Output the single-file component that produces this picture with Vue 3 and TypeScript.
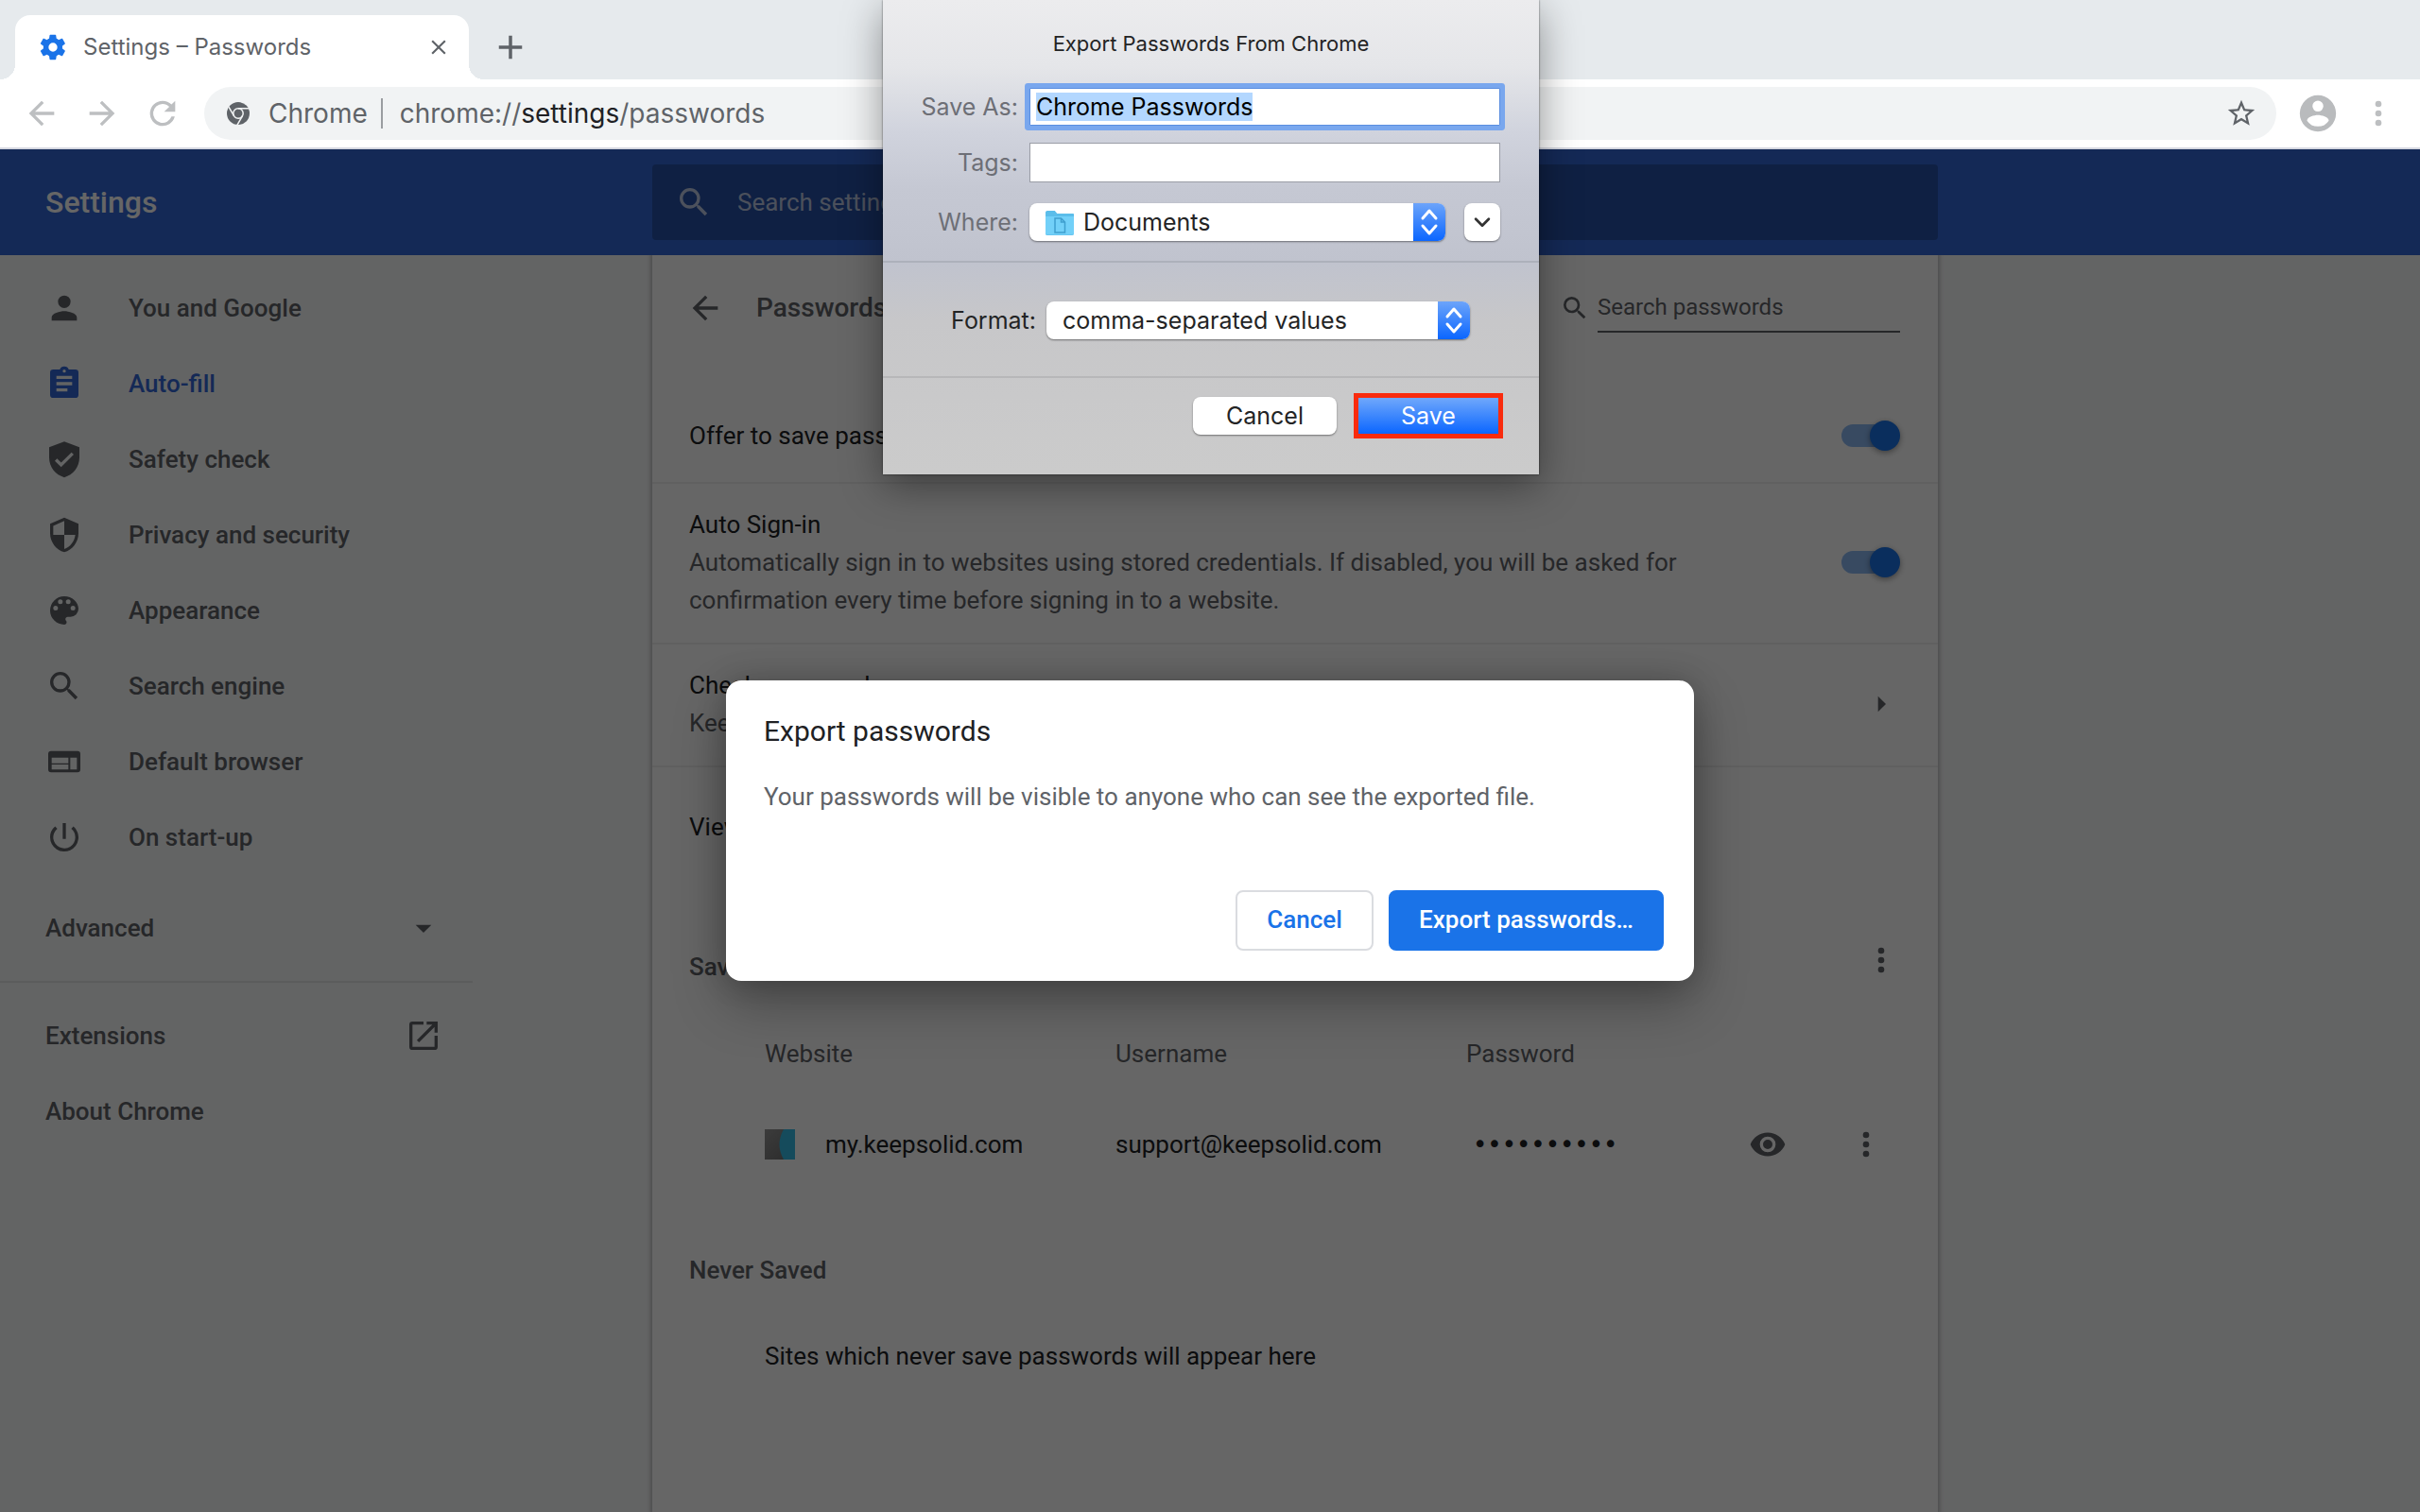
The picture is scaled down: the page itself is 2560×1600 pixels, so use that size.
<script setup lang="ts">
import { h, onMounted, ref } from 'vue'

const icons: Record<string, string> = {
  gear: 'M19.4 13c0-.3.1-.7.1-1s0-.7-.1-1l2.1-1.6c.2-.2.2-.4.1-.6l-2-3.5c-.1-.2-.4-.3-.6-.2l-2.5 1c-.5-.4-1.1-.7-1.7-1l-.4-2.6c0-.3-.2-.5-.5-.5h-4c-.2 0-.5.2-.5.4l-.4 2.7c-.6.3-1.1.6-1.7 1l-2.5-1c-.2-.1-.5 0-.6.2l-2 3.5c-.1.2 0 .5.1.6L4.5 11c0 .3-.1.7-.1 1s0 .7.1 1l-2.2 1.6c-.2.2-.2.4-.1.6l2 3.5c.1.2.4.3.6.2l2.5-1c.5.4 1.1.7 1.7 1l.4 2.7c0 .2.2.4.5.4h4c.2 0 .5-.2.5-.4l.4-2.7c.6-.3 1.1-.6 1.7-1l2.5 1c.2.1.5 0 .6-.2l2-3.5c.1-.2.1-.5-.1-.6zM12 15.5a3.5 3.5 0 1 1 0-7 3.5 3.5 0 0 1 0 7z',
  close: 'M19 6.4 17.6 5 12 10.6 6.400 5 5 6.400 10.600 12 5 17.600 6.400 19 12 13.400 17.600 19 19 17.600 13.400 12z',
  plus: 'M19 13h-6v6h-2v-6H5v-2h6V5h2v6h6z',
  back: 'M20 11H7.83l5.59-5.59L12 4l-8 8 8 8 1.41-1.41L7.83 13H20z',
  forward: 'M12 4l-1.41 1.41L16.17 11H4v2h12.17l-5.58 5.59L12 20l8-8z',
  reload: 'M17.65 6.35A7.958 7.958 0 0 0 12 4a8 8 0 1 0 7.73 10h-2.08A6 6 0 1 1 12 6c1.66 0 3.14.69 4.22 1.78L13 11h7V4z',
  star: 'M22 9.24l-7.19-.62L12 2 9.19 8.63 2 9.24l5.46 4.73L5.82 21 12 17.27 18.18 21l-1.63-7.03zM12 15.4l-3.76 2.27 1-4.28-3.32-2.88 4.38-.38L12 6.1l1.71 4.04 4.38.38-3.32 2.88 1 4.28z',
  account: 'M12 2a10 10 0 1 0 0 20 10 10 0 0 0 0-20zm0 3a3 3 0 1 1 0 6 3 3 0 0 1 0-6zm0 14.2a7.200 7.200 0 0 1-6-3.220c.03-1.990 4-3.080 6-3.080s5.970 1.090 6 3.080a7.200 7.200 0 0 1-6 3.220z',
  more: 'M12 8a2 2 0 1 0 0-4 2 2 0 0 0 0 4zm0 2a2 2 0 1 0 0 4 2 2 0 0 0 0-4zm0 6a2 2 0 1 0 0 4 2 2 0 0 0 0-4z',
  search: 'M15.5 14h-.79l-.28-.27A6.471 6.471 0 0 0 16 9.5 6.5 6.5 0 1 0 9.5 16c1.61 0 3.09-.59 4.23-1.57l.27.28v.79l5 4.99L20.49 19zm-6 0a4.5 4.5 0 1 1 0-9 4.5 4.5 0 0 1 0 9z',
  person: 'M12 12a4 4 0 1 0 0-8 4 4 0 0 0 0 8zm0 2c-2.67 0-8 1.34-8 4v2h16v-2c0-2.66-5.33-4-8-4z',
  clipboard: 'M19 3h-4.18a3 3 0 0 0-5.64 0H5a2 2 0 0 0-2 2v14a2 2 0 0 0 2 2h14a2 2 0 0 0 2-2V5a2 2 0 0 0-2-2zm-7 0a1 1 0 1 1 0 2 1 1 0 0 1 0-2zm2 14H7v-2h7zm3-4H7v-2h10zm0-4H7V7h10z',
  shieldCheck: 'M12 .8 2.400 4.400V11c0 5.900 4 11 9.600 12.500 5.600-1.500 9.600-6.600 9.600-12.500V4.400zM10 17l-4-4 1.410-1.410L10 14.170l6.590-6.590L18 9z',
  shieldHalf: 'M12 1 3 5v6c0 5.550 3.840 10.740 9 12 5.160-1.260 9-6.450 9-12V5zm0 11h7c-.53 4.120-3.280 7.790-7 8.940V12H5V6.300l7-3.110z',
  palette: 'M12 3a9 9 0 1 0 0 18c.83 0 1.5-.67 1.5-1.5 0-.39-.15-.74-.39-1.01-.23-.26-.38-.61-.38-.99 0-.83.67-1.5 1.5-1.5H16a5 5 0 0 0 5-5c0-4.42-4.03-8-9-8zM6.500 12a1.500 1.500 0 1 1 0-3 1.500 1.500 0 0 1 0 3zm3-4a1.500 1.500 0 1 1 0-3 1.500 1.500 0 0 1 0 3zm5 0a1.500 1.500 0 1 1 0-3 1.500 1.500 0 0 1 0 3zm3 4a1.500 1.500 0 1 1 0-3 1.500 1.500 0 0 1 0 3z',
  browser: 'M20.4 5.200H3.600a1.800 1.800 0 0 0-1.800 1.800v10a1.800 1.800 0 0 0 1.800 1.800h16.800a1.800 1.800 0 0 0 1.800-1.800V7a1.800 1.800 0 0 0-1.800-1.800zM14.600 17H4v-3.200h10.600zm0-4H4V9.400h10.600zM20 17h-4.200V9.400H20z',
  power: 'M13 3h-2v10h2zm4.83 2.17-1.42 1.42A6.92 6.92 0 0 1 19 12a7 7 0 1 1-11.41-5.42L6.17 5.17A8.932 8.932 0 0 0 3 12a9 9 0 1 0 14.83-6.83z',
  caretDown: 'M7 10l5 5 5-5z',
  caretRight: 'M10 7l5 5-5 5z',
  launch: 'M19 19H5V5h7V3H5a2 2 0 0 0-2 2v14a2 2 0 0 0 2 2h14a2 2 0 0 0 2-2v-7h-2zM14 3v2h3.59l-9.83 9.83 1.41 1.41L19 6.41V10h2V3z',
  eye: 'M12 4.500C7 4.500 2.730 7.610 1 12c1.730 4.390 6 7.500 11 7.500s9.270-3.110 11-7.500c-1.730-4.390-6-7.500-11-7.500zM12 17a5 5 0 1 1 0-10 5 5 0 0 1 0 10zm0-8a3 3 0 1 0 0 6 3 3 0 0 0 0-6z',
}

const Icon = (props: { name: string }) =>
  h('svg', { viewBox: '0 0 24 24', 'aria-hidden': 'true' }, [
    h('path', { d: icons[props.name], 'fill-rule': 'evenodd' }),
  ])
Icon.props = ['name']

interface MenuItem { icon: string; label: string; active?: boolean }
const menu: MenuItem[] = [
  { icon: 'person', label: 'You and Google' },
  { icon: 'clipboard', label: 'Auto-fill', active: true },
  { icon: 'shieldCheck', label: 'Safety check' },
  { icon: 'shieldHalf', label: 'Privacy and security' },
  { icon: 'palette', label: 'Appearance' },
  { icon: 'search', label: 'Search engine' },
  { icon: 'browser', label: 'Default browser' },
  { icon: 'power', label: 'On start-up' },
]

const logins = [{ site: 'my.keepsolid.com', user: 'support@keepsolid.com', secret: 'keepsolid1' }]

const offerToSave = ref(true)
const autoSignIn = ref(true)
const fileName = ref('Chrome Passwords')
const tags = ref('')
const nameField = ref<HTMLInputElement | null>(null)

onMounted(() => {
  nameField.value?.focus()
  nameField.value?.select()
})
</script>

<template>
  <div class="window">
    <div class="tabstrip">
      <div class="tab">
        <Icon name="gear" class="tab-gear" />
        <span class="tab-title">Settings – Passwords</span>
        <button class="icon-btn" aria-label="Close tab"><Icon name="close" class="i26" /></button>
      </div>
      <button class="icon-btn new-tab" aria-label="New tab"><Icon name="plus" class="i42" /></button>
    </div>

    <nav class="toolbar" aria-label="Browser">
      <button class="icon-btn pale" aria-label="Back"><Icon name="back" class="i40" /></button>
      <button class="icon-btn pale" aria-label="Forward"><Icon name="forward" class="i40" /></button>
      <button class="icon-btn pale" aria-label="Reload"><Icon name="reload" class="i40" /></button>
      <div class="omnibox">
        <svg class="chrome-logo" viewBox="0 0 24 24" aria-hidden="true">
          <circle cx="12" cy="12" r="12" fill="#5f6368" />
          <g fill="none" stroke="#f1f3f4" stroke-width="1.5">
            <circle cx="12" cy="12" r="5.2" />
            <path d="M12 6.800H23.500M7.500 14.600 1.800 4.800M16.500 14.600 10.800 24.500" />
          </g>
        </svg>
        <span class="origin">Chrome</span>
        <span class="url">chrome://<b>settings</b>/passwords</span>
        <button class="icon-btn star" aria-label="Bookmark"><Icon name="star" class="i34" /></button>
      </div>
      <button class="icon-btn profile" aria-label="Profile"><Icon name="account" class="i46" /></button>
      <button class="icon-btn pale" aria-label="Menu"><Icon name="more" class="i40" /></button>
    </nav>

    <div class="page">
      <header class="header">
        <h1>Settings</h1>
        <label class="site-search">
          <Icon name="search" class="i40" />
          <input type="search" placeholder="Search settings" aria-label="Search settings" />
        </label>
      </header>

      <div class="columns">
        <aside class="sidebar">
          <a v-for="item in menu" :key="item.label" href="#" class="menu-item" :class="{ active: item.active }">
            <Icon :name="item.icon" class="i40" />{{ item.label }}
          </a>
          <button class="menu-row advanced">Advanced<Icon name="caretDown" class="i40" /></button>
          <hr />
          <a href="#" class="menu-row">Extensions<Icon name="launch" class="i40" /></a>
          <a href="#" class="menu-row">About Chrome</a>
        </aside>

        <main class="card">
          <div class="card-head">
            <button class="icon-btn" aria-label="Back to Auto-fill"><Icon name="back" class="i40" /></button>
            <h2>Passwords</h2>
            <label class="pw-search">
              <Icon name="search" class="i32" />
              <input type="search" placeholder="Search passwords" aria-label="Search passwords" />
            </label>
          </div>

          <div class="row first">
            <label for="offer">Offer to save passwords</label>
            <input id="offer" v-model="offerToSave" type="checkbox" class="toggle" />
          </div>
          <div class="row">
            <label for="auto" class="text">
              Auto Sign-in
              <span class="sub">Automatically sign in to websites using stored credentials. If disabled, you will be asked for confirmation every time before signing in to a website.</span>
            </label>
            <input id="auto" v-model="autoSignIn" type="checkbox" class="toggle" />
          </div>
          <div class="row">
            <div class="text">
              Check passwords
              <span class="sub">Keep</span>
            </div>
            <button class="icon-btn" aria-label="Check passwords"><Icon name="caretRight" class="i40" /></button>
          </div>
          <div class="row view">View saved passwords</div>

          <div class="section-head">
            <h3>Saved Passwords</h3>
            <button class="icon-btn" aria-label="More actions"><Icon name="more" class="i40" /></button>
          </div>
          <table>
            <colgroup><col class="c1" /><col class="c1" /><col class="c3" /><col /></colgroup>
            <thead>
              <tr><th>Website</th><th>Username</th><th>Password</th><th></th></tr>
            </thead>
            <tbody>
              <tr v-for="l in logins" :key="l.site">
                <td>
                  <div class="site">
                    <svg class="favicon" viewBox="0 0 32 32" aria-hidden="true">
                      <defs><linearGradient id="fav" x1="0" x2="1" y1="0" y2="1"><stop offset="0" stop-color="#959595" /><stop offset="1" stop-color="#6c6c6c" /></linearGradient></defs>
                      <path d="M0 0h32v32H0z" fill="url(#fav)" />
                      <path d="M20 0h12v32H20C14 21 14 11 20 0z" fill="#36bce6" />
                    </svg>{{ l.site }}
                  </div>
                </td>
                <td>{{ l.user }}</td>
                <td><input class="secret" type="password" readonly :value="l.secret" aria-label="Password" /></td>
                <td>
                  <div class="actions">
                    <button class="icon-btn" aria-label="Show password"><Icon name="eye" class="i40" /></button>
                    <button class="icon-btn" aria-label="More actions"><Icon name="more" class="i40" /></button>
                  </div>
                </td>
              </tr>
            </tbody>
          </table>
          <h3 class="never">Never Saved</h3>
          <p class="empty">Sites which never save passwords will appear here</p>
        </main>
      </div>

      <div class="scrim">
        <section class="dialog" role="dialog" aria-labelledby="dlg-title">
          <h2 id="dlg-title">Export passwords</h2>
          <p>Your passwords will be visible to anyone who can see the exported file.</p>
          <div class="dialog-actions">
            <button class="btn">Cancel</button>
            <button class="btn primary">Export passwords…</button>
          </div>
        </section>
      </div>
    </div>

    <form class="sheet" @submit.prevent>
      <div class="sheet-top">
        <h2>Export Passwords From Chrome</h2>
        <div class="field">
          <label for="save-as">Save As:</label>
          <input id="save-as" ref="nameField" v-model="fileName" type="text" class="name" />
        </div>
        <div class="field tag-field">
          <label for="tags">Tags:</label>
          <input id="tags" v-model="tags" type="text" class="tags" />
        </div>
        <div class="field">
          <label for="where">Where:</label>
          <div class="popup where">
            <select id="where"><option>Documents</option></select>
            <svg class="folder" viewBox="0 0 32 28" aria-hidden="true">
              <path d="M1 3c0-1 .6-2 1.800-2h8l2.500 3H30c.700 0 1 .4 1 1v20c0 1-.6 2-1.800 2H2.800C1.600 27 1 26 1 25z" fill="#5bbdea" />
              <path d="M1 7h30v18c0 1-.6 1.500-1.800 1.500H2.800C1.600 26.500 1 26 1 25z" fill="#72d0f8" />
              <path d="M11 9h6.500l4 4v11H11zM17.500 9v4h4" fill="none" stroke="#3f9fce" stroke-width="1.5" />
            </svg>
            <span class="stepper"><svg viewBox="0 0 34 40" aria-hidden="true"><path d="M10 16l7-8 7 8M10 24l7 8 7-8" /></svg></span>
          </div>
          <button class="expand" type="button" aria-label="Show more">
            <svg viewBox="0 0 24 24" aria-hidden="true"><path d="M4.500 8.500 12 16l7.500-7.500" /></svg>
          </button>
        </div>
      </div>
      <div class="sheet-format">
        <label for="format">Format:</label>
        <div class="popup format">
          <select id="format"><option>comma-separated values</option></select>
          <span class="stepper"><svg viewBox="0 0 34 40" aria-hidden="true"><path d="M10 16l7-8 7 8M10 24l7 8 7-8" /></svg></span>
        </div>
      </div>
      <div class="sheet-actions">
        <button type="button" class="mac-btn">Cancel</button>
        <button type="submit" class="mac-btn save">Save</button>
      </div>
    </form>
  </div>
</template>

<style>
body {
  margin: 0;
}
</style>

<style scoped>
.window {
  position: relative;
  display: flex;
  flex-direction: column;
  min-height: 100vh;
  font: 26px/40px Roboto, sans-serif;
  color: #202124;
}
.window *,
.window *::before,
.window *::after {
  box-sizing: border-box;
}
h1,
h2,
h3,
p {
  margin: 0;
  font-weight: 400;
}
button,
input,
select {
  margin: 0;
  padding: 0;
  border: 0;
  background: none;
  font: inherit;
  color: inherit;
  outline: 0;
  appearance: none;
}
a {
  color: inherit;
  text-decoration: none;
}
svg {
  display: block;
  flex: none;
  fill: currentColor;
}
.i26 { width: 26px; height: 26px; }
.i32 { width: 32px; height: 32px; }
.i34 { width: 34px; height: 34px; }
.i40 { width: 40px; height: 40px; }
.i42 { width: 42px; height: 42px; }
.i46 { width: 46px; height: 46px; }
.icon-btn {
  flex: none;
  color: #5f6368;
}

/* tab strip */
.tabstrip {
  display: flex;
  align-items: flex-end;
  height: 84px;
  padding-left: 16px;
  background: #e6eaed;
  font-family: Inter, sans-serif;
}
.tab {
  position: relative;
  display: flex;
  align-items: center;
  width: 480px;
  height: 68px;
  padding: 0 19px 0 24px;
  border-radius: 16px 16px 0 0;
  background: #fff;
  color: #5f6368;
  font-size: 24px;
}
.tab::before,
.tab::after {
  content: '';
  position: absolute;
  bottom: 0;
  width: 16px;
  height: 16px;
}
.tab::before {
  left: -16px;
  background: radial-gradient(circle at 0 0, transparent 16px, #fff 16px);
}
.tab::after {
  right: -16px;
  background: radial-gradient(circle at 100% 0, transparent 16px, #fff 16px);
}
.tab-gear {
  width: 32px;
  height: 32px;
  margin-right: 16px;
  color: #1a73e8;
}
.tab-title {
  flex: 1;
}
.new-tab {
  margin: 0 0 13px 23px;
}

/* toolbar */
.toolbar {
  display: flex;
  align-items: center;
  gap: 24px;
  height: 74px;
  padding: 0 24px;
  border-bottom: 2px solid #d5d7e0;
  background: #fff;
}
.pale {
  color: #bdbfc1;
}
.profile {
  margin: 0 -3px;
  color: #b9bbbd;
}
.omnibox {
  display: flex;
  flex: 1;
  align-items: center;
  min-width: 0;
  height: 56px;
  padding: 0 20px 0 24px;
  border-radius: 28px;
  background: #f1f3f4;
  color: #5f6368;
  font: 28px/40px Inter, sans-serif;
}
.chrome-logo {
  width: 24px;
  height: 24px;
}
.origin {
  margin: 0 18px 0 20px;
  padding-right: 14px;
  border-right: 2px solid #9a9da1;
  line-height: 32px;
}
.url b {
  font-weight: 400;
  color: #202124;
}
.star {
  margin-left: auto;
}

/* settings page */
.page {
  position: relative;
  display: flex;
  flex: 1;
  flex-direction: column;
  background: #f8f9fa;
}
.header,
.columns {
  display: grid;
  grid-template-columns: 23fr minmax(0, 1360px) 17fr;
}
.header {
  align-items: center;
  height: 112px;
  background: #3367d6;
  color: #fff;
}
.header h1 {
  padding-left: 48px;
  font-size: 32px;
  font-weight: 500;
}
.site-search {
  display: flex;
  align-items: center;
  gap: 26px;
  height: 80px;
  padding-left: 24px;
  border-radius: 4px;
  background: rgba(0, 0, 0, 0.22);
  color: rgba(255, 255, 255, 0.7);
}
.site-search input,
.pw-search input {
  flex: 1;
  min-width: 0;
}
input::placeholder {
  color: inherit;
  opacity: 1;
}
.columns {
  flex: 1;
}
.sidebar {
  width: 500px;
  padding-top: 16px;
  color: #5f6368;
  font-weight: 500;
}
.menu-item {
  display: flex;
  align-items: center;
  gap: 48px;
  height: 80px;
  padding-left: 48px;
}
.menu-item.active {
  color: #3367d6;
}
.menu-row {
  display: flex;
  align-items: center;
  justify-content: space-between;
  width: 100%;
  height: 80px;
  padding: 0 32px 0 48px;
}
.advanced {
  margin-top: 16px;
}
hr {
  height: 2px;
  margin: 16px 0;
  border: 0;
  background: rgba(0, 0, 0, 0.08);
}
.card {
  background: #fff;
  box-shadow: 0 0 4px 2px rgba(60, 64, 67, 0.3);
  clip-path: inset(0 -8px);
}
.card-head {
  display: flex;
  align-items: center;
  height: 112px;
  padding: 0 40px 0 36px;
}
.card-head h2 {
  flex: 1;
  margin-left: 34px;
  color: #5f6368;
  font-size: 28px;
  font-weight: 500;
}
.pw-search {
  display: flex;
  align-items: center;
  gap: 8px;
  color: #5f6368;
  font-size: 24px;
}
.pw-search input {
  width: 320px;
  height: 52px;
  border-bottom: 2px solid #5f6368;
}
.row {
  display: flex;
  align-items: center;
  justify-content: space-between;
  padding: 23px 40px 25px 39px;
  border-top: 2px solid rgba(0, 0, 0, 0.06);
}
.row.first {
  margin-top: 32px;
  height: 96px;
  border: 0;
}
.text {
  max-width: 1080px;
}
.sub {
  display: block;
  color: #5f6368;
}
.view {
  height: 130px;
}
.toggle {
  position: relative;
  width: 56px;
  height: 24px;
  margin-right: 6px;
  border-radius: 12px;
  background: #8cb9f3;
}
.toggle::before {
  content: '';
  position: absolute;
  top: -4px;
  right: -6px;
  width: 32px;
  height: 32px;
  border-radius: 50%;
  background: #1a73e8;
  box-shadow: 0 2px 6px rgba(0, 0, 0, 0.4);
}
.section-head {
  display: flex;
  align-items: center;
  justify-content: space-between;
  height: 56px;
  margin-top: 48px;
  padding: 0 40px 0 39px;
}
h3 {
  color: #5f6368;
  font-size: 26px;
  font-weight: 500;
}
.section-head h3 {
  padding-top: 14px;
}
table {
  width: calc(100% - 159px);
  margin: 32px 40px 0 119px;
  border-collapse: collapse;
  table-layout: fixed;
}
.c1 { width: 371px; }
.c3 { width: 299px; }
th,
td {
  padding: 0;
  text-align: left;
}
th {
  height: 78px;
  color: #5f6368;
  font-weight: 400;
}
td {
  height: 114px;
}
.site,
.actions {
  display: flex;
  align-items: center;
}
.favicon {
  width: 32px;
  height: 32px;
  margin-right: 32px;
}
.actions {
  gap: 64px;
}
.secret {
  display: block;
  width: 200px;
  padding-left: 7px;
  font-family: 'DejaVu Sans', sans-serif;
}
.never {
  margin: 56px 0 0 39px;
}
.empty {
  margin: 51px 0 0 119px;
}

/* export dialog */
.scrim {
  position: absolute;
  inset: 0;
  display: grid;
  place-items: center;
  background: rgba(0, 0, 0, 0.6);
}
.dialog {
  width: 1024px;
  max-width: 100%;
  padding: 32px;
  border-radius: 16px;
  background: #fff;
  box-shadow: 0 0 32px rgba(0, 0, 0, 0.2), 0 24px 56px rgba(0, 0, 0, 0.3);
}
.dialog h2 {
  margin-left: 8px;
  font-size: 30px;
  line-height: 44px;
}
.dialog p {
  margin: 27px 0 79px 8px;
  color: #5f6368;
}
.dialog-actions {
  display: flex;
  justify-content: flex-end;
  gap: 16px;
}
.btn {
  min-width: 146px;
  height: 64px;
  padding: 0 30px 2px;
  border: 2px solid #dadce0;
  border-radius: 8px;
  color: #1a73e8;
  font-weight: 500;
}
.btn.primary {
  border-color: #1a73e8;
  background: #1a73e8;
  color: #fff;
}

/* save sheet */
.sheet {
  position: absolute;
  top: 0;
  left: 50%;
  width: 694px;
  margin-left: -346px;
  background: linear-gradient(#ececee 0, #e5e6e9 70px, #d0d3dd 140px, #c5c8d3 200px, #c0c3ce 276px, #c7c7c9 340px, #cbcbcb 500px);
  box-shadow: 0 0 2px rgba(0, 0, 0, 0.6), 0 12px 40px rgba(0, 0, 0, 0.4);
  font: 25px/32px Inter, sans-serif;
  color: #232425;
}
.sheet-top {
  padding: 32px 41px 21px 0;
  border-bottom: 2px solid #adb1bb;
}
.sheet-top h2 {
  margin: 0 -41px 33px 0;
  font-size: 22px;
  line-height: 28px;
  text-align: center;
}
.field {
  display: flex;
  align-items: center;
}
.tag-field {
  margin: 18px 0 22px;
}
.field label {
  flex: none;
  width: 143px;
  margin-right: 12px;
  color: #6d6f76;
  text-align: right;
}
.name,
.tags {
  flex: 1;
  min-width: 0;
  height: 40px;
  padding: 0 6px;
  border: 1px solid #9a9da6;
  background: #fff;
  color: #000;
}
.tags {
  height: 42px;
}
.name {
  border-color: #5a8ee0;
  border-radius: 1px;
  box-shadow: 0 0 0 5px #79a7ee;
}
.name::selection {
  background: #b3d7ff;
  color: #000;
}
.popup {
  position: relative;
  height: 40px;
  border-radius: 8px;
  background: #fff;
  box-shadow: 0 1px 2px rgba(0, 0, 0, 0.45);
}
.where {
  flex: 1;
}
.format {
  width: 448px;
}
.popup select {
  width: 100%;
  height: 40px;
  padding: 0 40px 0 17px;
}
.where select {
  padding-left: 57px;
}
.folder {
  position: absolute;
  top: 7px;
  left: 16px;
  width: 32px;
  height: 28px;
  pointer-events: none;
}
.stepper {
  position: absolute;
  top: 0;
  right: 0;
  width: 34px;
  height: 40px;
  border-radius: 0 8px 8px 0;
  background: linear-gradient(#6ca4fa, #0b66ff);
  pointer-events: none;
}
.stepper path,
.expand path {
  fill: none;
  stroke: #fff;
  stroke-width: 3;
  stroke-linecap: round;
  stroke-linejoin: round;
}
.expand {
  display: grid;
  place-items: center;
  width: 38px;
  height: 40px;
  margin-left: 20px;
  border-radius: 8px;
  background: #fff;
  box-shadow: 0 1px 2px rgba(0, 0, 0, 0.45);
}
.expand svg {
  width: 22px;
  height: 22px;
}
.expand path {
  stroke: #333;
}
.sheet-format {
  display: flex;
  align-items: center;
  justify-content: flex-end;
  gap: 11px;
  padding: 41px 73px 39px 0;
  border-bottom: 2px solid #b7b7b9;
}
.sheet-actions {
  display: flex;
  align-items: center;
  justify-content: flex-end;
  gap: 18px;
  padding: 16px 38px 38px;
}
.mac-btn {
  width: 152px;
  height: 40px;
  border-radius: 8px;
  background: #fff;
  box-shadow: 0 1px 2px rgba(0, 0, 0, 0.45);
}
.save {
  width: 158px;
  height: 48px;
  border: 5px solid #f92b0d;
  border-radius: 0;
  background: linear-gradient(#70a8fb, #0b66ff);
  box-shadow: none;
  color: #fff;
}
</style>
